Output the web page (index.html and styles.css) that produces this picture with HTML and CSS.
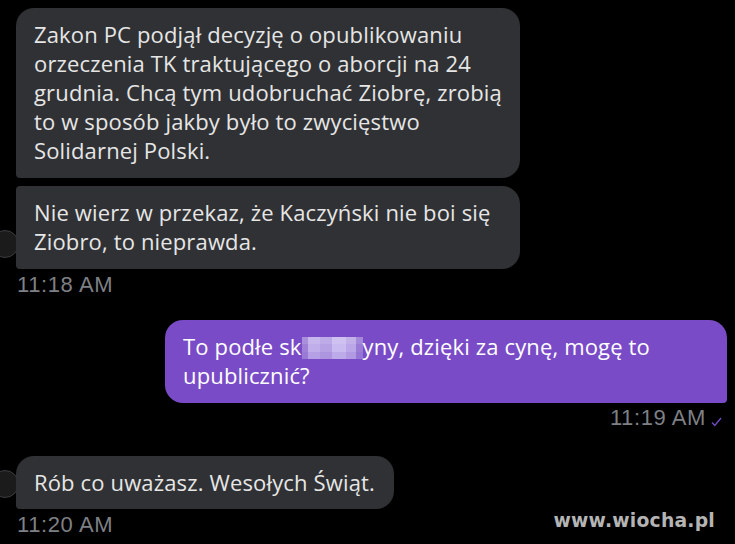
FILE: index.html
```html
<!DOCTYPE html>
<html lang="pl">
<head>
<meta charset="utf-8">
<title>Czat</title>
<link rel="stylesheet" href="styles.css">
</head>
<body>
<main class="chat">
  <section class="group group-in">
    <div class="row">
      <div class="bubble bubble-in first wide">Zakon PC podjął decyzję o opublikowaniu<br>orzeczenia TK traktującego o aborcji na 24<br>grudnia. Chcą tym udobruchać Ziobrę, zrobią<br>to w sposób jakby było to zwycięstwo<br>Solidarnej Polski.</div>
    </div>
    <div class="row">
      <div class="avatar"></div>
      <div class="bubble bubble-in last wide">Nie wierz w przekaz, że Kaczyński nie boi się<br>Ziobro, to nieprawda.</div>
    </div>
    <div class="time">11:18 AM</div>
  </section>

  <section class="group group-out">
    <div class="bubble bubble-out">To podłe sk<span class="blur"></span>yny, dzięki za cynę, mogę to<br>upublicznić?</div>
    <div class="time time-out">11:19 AM<svg class="check" width="11" height="10" viewBox="0 0 11 10"><polyline points="1,5.5 3.8,8.5 10,1" fill="none" stroke="#6f4cc0" stroke-width="1.4"/></svg></div>
  </section>

  <section class="group group-in">
    <div class="row">
      <div class="avatar"></div>
      <div class="bubble bubble-in single">Rób co uważasz. Wesołych Świąt.</div>
    </div>
    <div class="time">11:20 AM</div>
  </section>
</main>
<div class="watermark">www.wiocha.pl</div>
</body>
</html>
```
FILE: styles.css
```css
html, body {
  margin: 0;
  padding: 0;
  background: #000;
  width: 735px;
  height: 544px;
  overflow: hidden;
}
body {
  position: relative;
  font-family: "Open Sans", "Noto Sans", sans-serif;
}
.chat {
  display: flex;
  flex-direction: column;
  padding: 8px 8px 0 16px;
}
.group {
  display: flex;
  flex-direction: column;
}
.group-in {
  align-items: flex-start;
  gap: 8px;
}
.row {
  display: flex;
  align-items: flex-end;
}
.avatar {
  width: 26px;
  height: 26px;
  border-radius: 50%;
  background: #1b1b1c;
  border: 1px solid #3c3d40;
  margin-left: -25px;
  margin-right: -3px;
  margin-bottom: 11px;
  flex: none;
}
.bubble {
  font-size: 22px;
  letter-spacing: 0.15px;
  line-height: 29px;
  color: #e6e6e6;
  white-space: nowrap;
  box-sizing: border-box;
}
.bubble-in {
  background: #303134;
  padding: 12px 12px 13px 18px;
}
.wide {
  width: 504px;
}
.first {
  border-radius: 18px 18px 18px 4px;
}
.last {
  border-radius: 4px 18px 18px 4px;
}
.single {
  border-radius: 18px 18px 18px 4px;
  padding: 12px 19px 12px 18px;
}
.time {
  font-family: "Liberation Sans", Arial, sans-serif;
  font-size: 22px;
  letter-spacing: 0.6px;
  line-height: 24px;
  color: #7e8085;
  margin-top: -4px;
  padding-left: 1px;
}
.group-out {
  align-items: flex-end;
  margin-top: 23px;
}
.bubble-out {
  background: #7a4bc7;
  color: #fff;
  width: 562px;
  padding: 12px 12px 13px 18px;
  border-radius: 18px 18px 4px 18px;
}
.blur {
  display: inline-block;
  width: 61px;
  height: 22px;
  vertical-align: -4px;
  background:
    linear-gradient(180deg, rgba(255,255,255,0.10) 0 7px, rgba(255,255,255,0) 7px 15px, rgba(120,80,200,0.15) 15px 22px),
    linear-gradient(90deg, #9f82d8 0 6px, #c0aeea 6px 18px, #b6a1e4 18px 30px, #c9bbef 30px 44px, #bba7e7 44px 54px, #9a7cd6 54px 61px);
}
.time-out {
  display: flex;
  align-items: center;
  gap: 5px;
  margin-top: 3px;
  margin-right: 5px;
}
.check {
  margin-top: 7px;
}
.group-out + .group-in {
  margin-top: 26px;
}
.watermark {
  position: absolute;
  right: 20px;
  bottom: 13px;
  font-family: "DejaVu Sans", Verdana, sans-serif;
  font-weight: bold;
  font-size: 18.8px;
  color: #b4b4b4;
  letter-spacing: 0.2px;
}
```
